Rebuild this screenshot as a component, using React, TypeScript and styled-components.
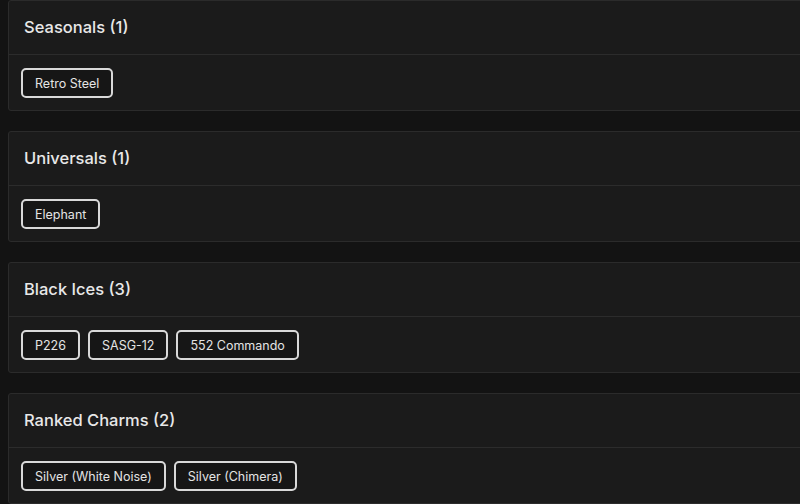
import React from 'react';
import styled, { createGlobalStyle } from 'styled-components';

const GlobalStyle = createGlobalStyle`
  html, body {
    margin: 0;
    padding: 0;
    background: #131313;
    overflow: hidden;
  }
  body {
    font-family: Inter, "Noto Sans", sans-serif;
    color: #e6e6e6;
  }
`;

const Page = styled.div`
  display: flex;
  flex-direction: column;
  row-gap: 20px;
  padding: 0 0 0 8px;
`;

const Card = styled.section`
  width: 820px;
  background: #1b1b1b;
  border: 1px solid #2b2b2b;
  border-radius: 3px;
`;

const CardHeader = styled.div`
  display: flex;
  align-items: center;
  height: 52px;
  padding: 0 15px 1px;
  border-bottom: 1px solid #2c2c2c;
  font-size: 16.5px;
  font-weight: 500;
  color: #e8e8e8;
`;

const CardBody = styled.div`
  display: flex;
  flex-wrap: wrap;
  gap: 8px;
  padding: 13px 12px 12px;
`;

const Tag = styled.button`
  height: 30px;
  padding: 0 12px;
  background: #161616;
  border: 2px solid #d9d9d9;
  border-radius: 5px;
  color: #e4e4e4;
  font-family: inherit;
  font-size: 12.5px;
  cursor: pointer;
`;

const sections: { title: string; items: string[] }[] = [
  { title: 'Seasonals', items: ['Retro Steel'] },
  { title: 'Universals', items: ['Elephant'] },
  { title: 'Black Ices', items: ['P226', 'SASG-12', '552 Commando'] },
  { title: 'Ranked Charms', items: ['Silver (White Noise)', 'Silver (Chimera)'] },
];

const App: React.FC = () => {
  return (
    <>
      <GlobalStyle />
      <Page>
        {sections.map(s => (
          <Card key={s.title}>
            <CardHeader>{s.title} ({s.items.length})</CardHeader>
            <CardBody>
              {s.items.map(item => <Tag key={item}>{item}</Tag>)}
            </CardBody>
          </Card>
        ))}
      </Page>
    </>
  );
};

export default App;
